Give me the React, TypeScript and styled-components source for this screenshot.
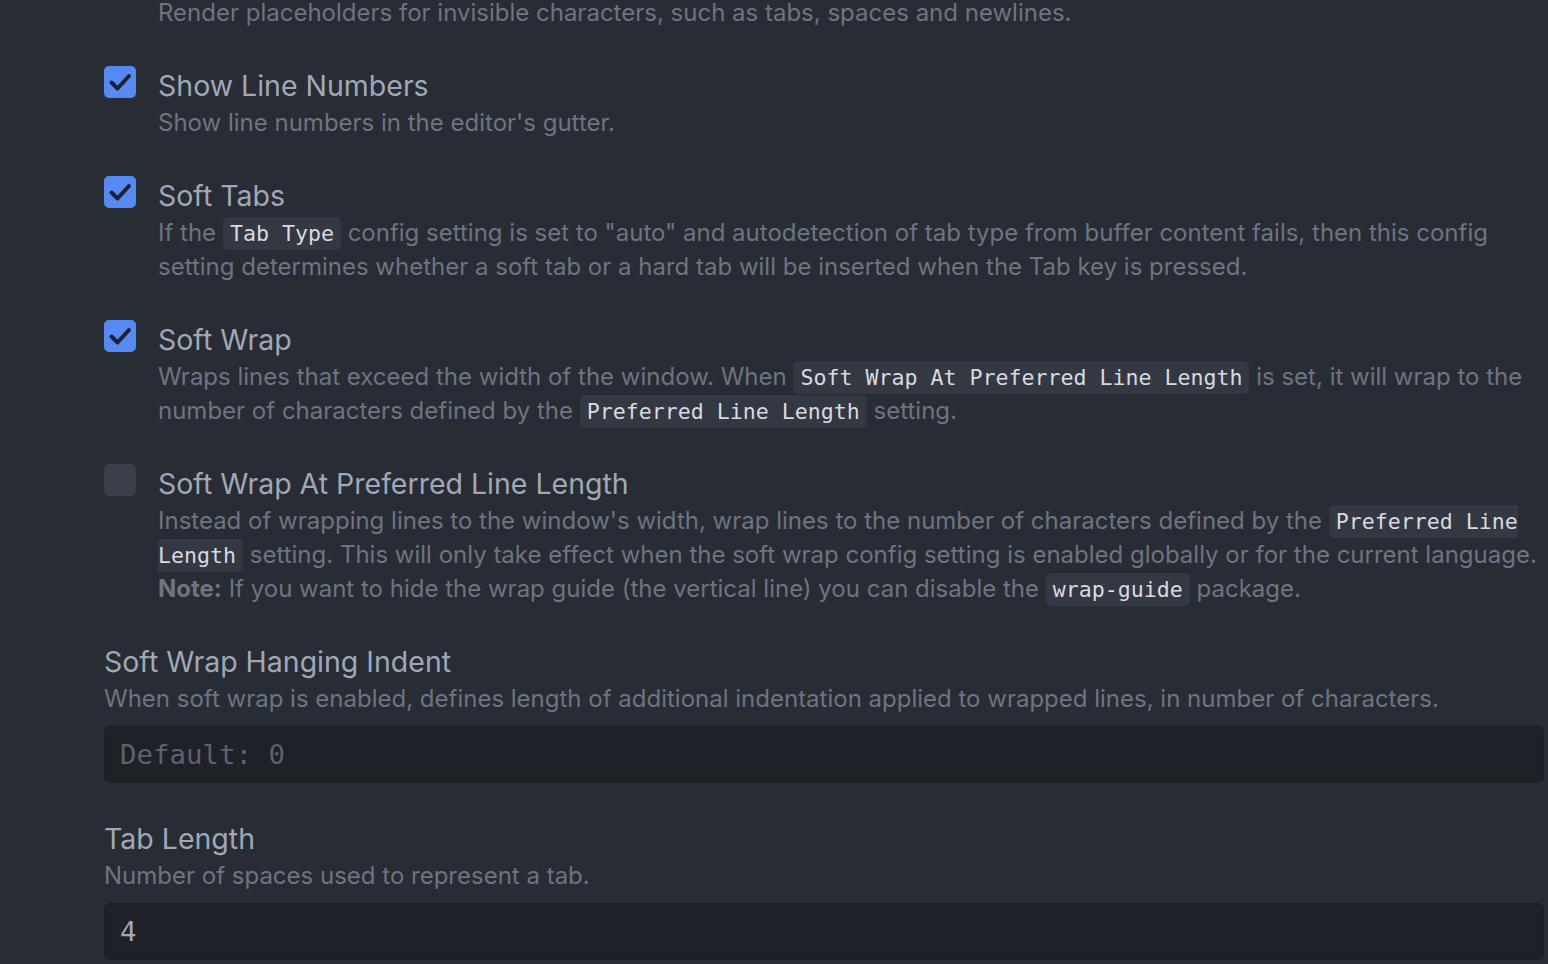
import styled, { createGlobalStyle } from 'styled-components';

const GlobalStyle = createGlobalStyle`
    html, body {
        margin: 0;
        padding: 0;
        background: #282c34;
        overflow: hidden;
    }
    body {
        font-family: Inter, "Noto Sans", "Liberation Sans", sans-serif;
    }
`;

const Page = styled.div`
    height: 964px;
    overflow: hidden;
    background: #282c34;
`;

const Section = styled.div`
    margin-top: -44px;
    padding: 0 4px 0 104px;
    display: flex;
    flex-direction: column;
    gap: 36px;
`;

const CheckRow = styled.div`
    display: flex;
    align-items: flex-start;
    gap: 22px;
`;

const Box = styled.div<{ $checked: boolean }>`
    flex: none;
    width: 32px;
    height: 32px;
    border-radius: 5px;
    background: ${p => (p.$checked ? '#568af2' : '#3a3f4b')};
    display: flex;
    align-items: center;
    justify-content: center;
`;

const Body = styled.div`
    flex: 1;
    min-width: 0;
`;

const Title = styled.div`
    font-size: 28.5px;
    line-height: 40px;
    color: #a0a8b6;
`;

const Desc = styled.div`
    font-size: 24px;
    line-height: 34px;
    color: #6e7480;

    b {
        font-weight: 700;
    }
`;

const Code = styled.code`
    font-family: "DejaVu Sans Mono", "Liberation Mono", monospace;
    font-size: 21.6px;
    line-height: 0;
    color: #d7dae0;
    background: #333842;
    border-radius: 5px;
    padding: 4px 7px;
`;

const Field = styled.div`
    display: flex;
    flex-direction: column;
`;

const Input = styled.div<{ $placeholder?: boolean }>`
    margin-top: 10px;
    height: 57px;
    box-sizing: border-box;
    border-radius: 6px;
    background: #1e2127;
    border: 1px solid #1b1d22;
    display: flex;
    align-items: center;
    padding: 0 15px;
    font-family: "DejaVu Sans Mono", "Liberation Mono", monospace;
    font-size: 27.4px;
    color: ${p => (p.$placeholder ? '#5c6370' : '#a0a8b6')};
`;

const Check = () => (
    <svg width="32" height="32" viewBox="0 0 32 32">
        <path d="M7.5 16.5 L13.5 22.5 L25 10" fill="none" stroke="#1c2234" strokeWidth="4" strokeLinecap="round" strokeLinejoin="round" />
    </svg>
);

type CheckProps = {
    title: string;
    checked: boolean;
    children: React.ReactNode;
};

const CheckSetting = ({ title, checked, children }: CheckProps) => (
    <CheckRow>
        <Box $checked={checked}>{checked && <Check />}</Box>
        <Body>
            <Title>{title}</Title>
            <Desc>{children}</Desc>
        </Body>
    </CheckRow>
);

const App = () => {
    return (
        <Page>
            <GlobalStyle />
            <Section>
                <CheckSetting title="Show Invisibles" checked={false}>
                    Render placeholders for invisible characters, such as tabs, spaces and newlines.
                </CheckSetting>
                <CheckSetting title="Show Line Numbers" checked>
                    Show line numbers in the editor's gutter.
                </CheckSetting>
                <CheckSetting title="Soft Tabs" checked>
                    If the <Code>Tab Type</Code> config setting is set to "auto" and autodetection of tab type from buffer content fails, then this config setting determines whether a soft tab or a hard tab will be inserted when the Tab key is pressed.
                </CheckSetting>
                <CheckSetting title="Soft Wrap" checked>
                    Wraps lines that exceed the width of the window. When <Code>Soft Wrap At Preferred Line Length</Code> is set, it will wrap to the number of characters defined by the <Code>Preferred Line Length</Code> setting.
                </CheckSetting>
                <CheckSetting title="Soft Wrap At Preferred Line Length" checked={false}>
                    Instead of wrapping lines to the window's width, wrap lines to the number of characters defined by the <Code>Preferred Line Length</Code> setting. This will only take effect when the soft wrap config setting is enabled globally or for the current language. <b>Note:</b> If you want to hide the wrap guide (the vertical line) you can disable the <Code>wrap-guide</Code> package.
                </CheckSetting>
                <Field>
                    <Title>Soft Wrap Hanging Indent</Title>
                    <Desc>When soft wrap is enabled, defines length of additional indentation applied to wrapped lines, in number of characters.</Desc>
                    <Input $placeholder>Default: 0</Input>
                </Field>
                <Field>
                    <Title>Tab Length</Title>
                    <Desc>Number of spaces used to represent a tab.</Desc>
                    <Input>4</Input>
                </Field>
            </Section>
        </Page>
    );
};

export default App;
